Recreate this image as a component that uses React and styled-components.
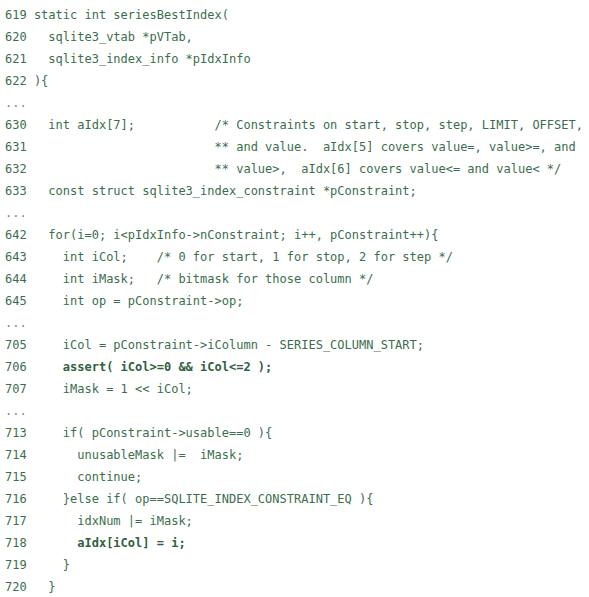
import React from 'react'
import styled, {createGlobalStyle} from 'styled-components'

const GlobalStyle = createGlobalStyle`
    body {
        margin: 0;
        background: #ffffff;
    }
`

const Listing = styled.div`
    padding: 4px 0 0 5px;
    font-family: "DejaVu Sans Mono", "Liberation Mono", monospace;
    font-size: 12px;
    line-height: 22px;
    color: #3b6e4c;
    background: #ffffff;
`

const Row = styled.div`
    display: flex;
    white-space: pre;
    height: 22px;
    font-weight: ${p => (p.$bold ? 700 : 400)};
    color: ${p => (p.$bold ? '#2f6140' : 'inherit')};
`

const LineNo = styled.span`
    flex: 0 0 4ch;
    font-weight: 400;
    color: #3b6e4c;
`

const Code = styled.span`
    flex: 1;
`

const Gap = styled.div`
    height: 22px;
    white-space: pre;
    color: #6f8f78;
`

const lines = [
    [619, 'static int seriesBestIndex('],
    [620, '  sqlite3_vtab *pVTab,'],
    [621, '  sqlite3_index_info *pIdxInfo'],
    [622, '){'],
    null,
    [630, '  int aIdx[7];           /* Constraints on start, stop, step, LIMIT, OFFSET,'],
    [631, '                         ** and value.  aIdx[5] covers value=, value>=, and'],
    [632, '                         ** value>,  aIdx[6] covers value<= and value< */'],
    [633, '  const struct sqlite3_index_constraint *pConstraint;'],
    null,
    [642, '  for(i=0; i<pIdxInfo->nConstraint; i++, pConstraint++){'],
    [643, '    int iCol;    /* 0 for start, 1 for stop, 2 for step */'],
    [644, '    int iMask;   /* bitmask for those column */'],
    [645, '    int op = pConstraint->op;'],
    null,
    [705, '    iCol = pConstraint->iColumn - SERIES_COLUMN_START;'],
    [706, '    assert( iCol>=0 && iCol<=2 );', true],
    [707, '    iMask = 1 << iCol;'],
    null,
    [713, '    if( pConstraint->usable==0 ){'],
    [714, '      unusableMask |=  iMask;'],
    [715, '      continue;'],
    [716, '    }else if( op==SQLITE_INDEX_CONSTRAINT_EQ ){'],
    [717, '      idxNum |= iMask;'],
    [718, '      aIdx[iCol] = i;', true],
    [719, '    }'],
    [720, '  }'],
]

export default function App() {
    return (
        <>
            <GlobalStyle />
            <Listing>
                {lines.map((l, i) =>
                    l === null ? (
                        <Gap key={i}>...</Gap>
                    ) : (
                        <Row key={i} $bold={l[2]}>
                            <LineNo>{l[0]}</LineNo>
                            <Code>{l[1]}</Code>
                        </Row>
                    )
                )}
            </Listing>
        </>
    )
}
